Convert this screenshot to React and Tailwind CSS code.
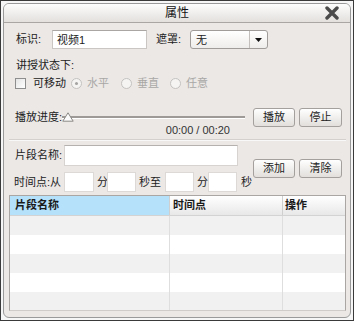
export default function App() {
  const radios = [
    { label: "水平", checked: true, gap: "ml-[5px]" },
    { label: "垂直", checked: false, gap: "ml-[12px]" },
    { label: "任意", checked: false, gap: "ml-[11px]" },
  ];

  return (
    <div className="w-[354px] h-[321px] border border-[#3a3a3a] bg-[#f6f6f6] p-[2px] font-['Liberation_Sans','Noto_Sans_CJK_SC',sans-serif] text-[11px] text-[#222]">
      <div className="h-full rounded-[6px] border border-[#9a9a9a] bg-[#ebe8e6] flex flex-col overflow-hidden">
        {/* Title bar */}
        <div className="h-[19px] shrink-0 flex items-center pl-[26px] pr-[10px] border-b border-[#a9a6a3] bg-gradient-to-b from-[#fdfdfd] to-[#e3e0dd]">
          <div className="flex-1 text-center leading-none text-[12px] text-[#111]">属性</div>
          <svg width="16" height="14" viewBox="0 0 16 14" className="w-[16px] h-[14px]">
            <path d="M3 2 L13 12 M13 2 L3 12" stroke="#4b4b4b" strokeWidth="3.4" strokeLinecap="round" />
          </svg>
        </div>

        {/* Row 1: 标识 / 遮罩 */}
        <div className="mt-[7px] h-[19px] flex items-center">
          <span className="ml-[12px] w-[36px] whitespace-nowrap">标识:</span>
          <div className="w-[95px] h-[19px] border border-[#c9c6c3] border-t-[#a9a6a3] bg-white flex items-center pl-[4px] pt-[2px]">
            视频1
          </div>
          <span className="ml-[9px] w-[34px] whitespace-nowrap">遮罩:</span>
          <div className="w-[78px] h-[19px] rounded-[3px] border border-[#9f9c99] bg-gradient-to-b from-white to-[#efedeb] flex items-center">
            <span className="flex-1 pl-[5px] pt-[2px]">无</span>
            <div className="w-[18px] h-full border-l border-[#c2bfbc] flex items-center justify-center">
              <svg width="7" height="4" viewBox="0 0 7 4">
                <path d="M0 0 H7 L3.5 4 Z" fill="#111" />
              </svg>
            </div>
          </div>
        </div>

        {/* Row 2 */}
        <div className="mt-[8px] ml-[12px] leading-[16px]">讲授状态下:</div>

        {/* Row 3: checkbox + radios */}
        <div className="mt-[2px] h-[16px] flex items-center">
          <div className="ml-[11px] w-[11px] h-[11px] border border-[#8e8e8e] bg-gradient-to-br from-[#e4e4e4] to-white" />
          <span className="ml-[7px]">可移动</span>
          {radios.map((r) => (
            <div key={r.label} className={`${r.gap} flex items-center`}>
              <div className="w-[11px] h-[11px] rounded-full border border-[#c4c2c0] bg-[#f5f4f3] flex items-center justify-center">
                {r.checked && <div className="w-[3px] h-[3px] rounded-full bg-[#a5a3a1]" />}
              </div>
              <span className="ml-[5px] text-[#a9a7a5]">{r.label}</span>
            </div>
          ))}
        </div>

        {/* Row 4: 播放进度 */}
        <div className="mt-[17px] flex items-start">
          <div className="w-[249px] flex items-start">
            <span className="ml-[11px] w-[47px] h-[19px] flex items-center whitespace-nowrap">播放进度:</span>
            <div className="w-[183px] flex flex-col">
              <div className="relative h-[19px] flex items-center">
                <div className="w-full h-[3px] border-t-2 border-[#9d9a97] bg-white" />
                <svg width="12" height="10" viewBox="0 0 12 10" className="absolute left-0 top-[4px]">
                  <path d="M6 0.8 L11.2 9.2 H0.8 Z" fill="#fbfbfb" stroke="#8a8886" strokeWidth="1" />
                </svg>
              </div>
              <div className="-mt-[2px] leading-[10px] h-[10px] text-[11px] text-right pr-[15px] text-[#333] font-['Liberation_Sans',sans-serif]">
                00:00 / 00:20
              </div>
            </div>
          </div>
          <div className="flex gap-[4px]">
            <button className="w-[42px] h-[19px] rounded-[3px] border border-[#a3a09d] bg-gradient-to-b from-white to-[#e2dfdc] leading-none">播放</button>
            <button className="w-[43px] h-[19px] rounded-[3px] border border-[#a3a09d] bg-gradient-to-b from-white to-[#e2dfdc] leading-none">停止</button>
          </div>
        </div>

        {/* Divider */}
        <div className="mt-[4px] ml-[5px] mr-[4px] h-[2px] border-t border-[#d3d0cd] bg-white/70" />

        {/* Row 5 & 6: 片段 */}
        <div className="mt-[4px] flex items-center">
          <div className="w-[249px] flex flex-col">
            <div className="h-[20px] flex items-center">
              <span className="ml-[11px] w-[49px] whitespace-nowrap">片段名称:</span>
              <div className="w-[174px] h-[21px] border border-[#d6d3d0] border-t-[#b4b1ae] bg-white" />
            </div>
            <div className="mt-[7px] h-[20px] flex items-center whitespace-nowrap">
              <span className="ml-[10px] w-[50px]">时间点:从</span>
              <div className="w-[30px] h-[20px] border border-[#dcd9d6] bg-white" />
              <span className="w-[13px] pl-[3px]">分</span>
              <div className="w-[29px] h-[20px] border border-[#dcd9d6] bg-white" />
              <span className="w-[29px] pl-[3px]">秒至</span>
              <div className="w-[29px] h-[20px] border border-[#dcd9d6] bg-white" />
              <span className="w-[14px] pl-[3px]">分</span>
              <div className="w-[29px] h-[20px] border border-[#dcd9d6] bg-white" />
              <span className="pl-[4px]">秒</span>
            </div>
          </div>
          <div className="flex gap-[4px]">
            <button className="w-[42px] h-[19px] rounded-[3px] border border-[#a3a09d] bg-gradient-to-b from-white to-[#e2dfdc] leading-none">添加</button>
            <button className="w-[43px] h-[19px] rounded-[3px] border border-[#a3a09d] bg-gradient-to-b from-white to-[#e2dfdc] leading-none">清除</button>
          </div>
        </div>

        {/* Table */}
        <div className="mt-[3px] ml-[5px] mr-[4px] h-[116px] border border-[#a9a6a3] border-b-[#cfccc9] bg-white flex flex-col overflow-hidden">
          <div className="h-[20px] shrink-0 flex font-bold text-[11px] text-[#1a1a1a] border-b border-[#d3d3d3]">
            <div className="w-[159px] bg-[#b6e1fa] flex items-center pl-[5px]">片段名称</div>
            <div className="w-[113px] border-l border-[#cfcfcf] bg-gradient-to-b from-white to-[#e8e8e8] flex items-center pl-[3px]">时间点</div>
            <div className="flex-1 border-l border-[#cfcfcf] bg-gradient-to-b from-white to-[#e8e8e8] flex items-center pl-[2px]">操作</div>
          </div>
          {[0, 1, 2, 3, 4].map((i) => (
            <div key={i} className={`h-[19px] shrink-0 flex ${i % 2 === 0 ? "bg-[#f1f1f1]" : "bg-white"}`}>
              <div className="w-[159px]" />
              <div className="w-[113px] border-l border-[#dedede]" />
              <div className="flex-1 border-l border-[#dedede]" />
            </div>
          ))}
        </div>
      </div>
    </div>
  );
}
